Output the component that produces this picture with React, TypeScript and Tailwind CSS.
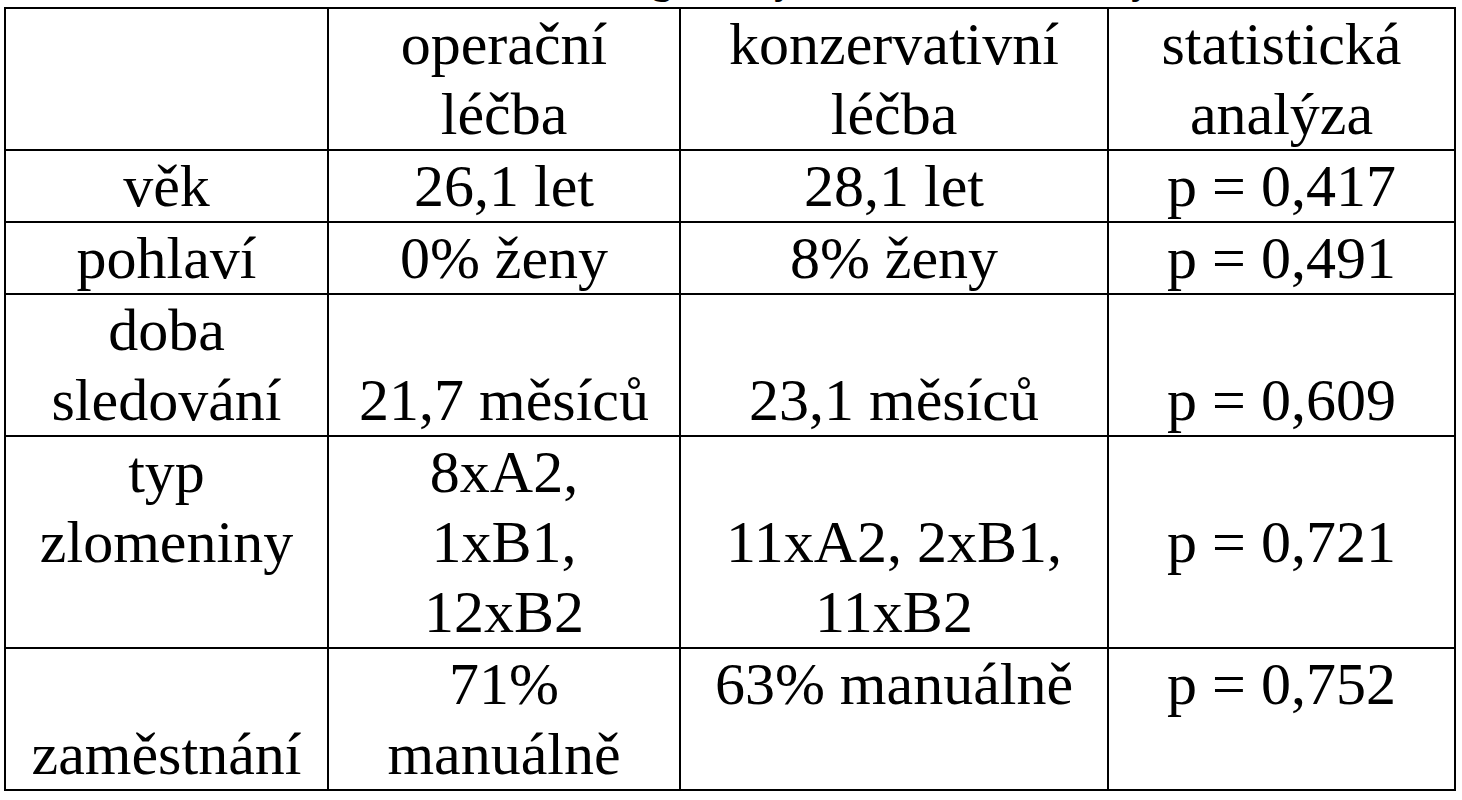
/*
 * Comparison table: operative vs. conservative treatment
 * - Times-like serif (Liberation Serif), large 60px type
 * - Plain black grid lines, white background
 * - Title row sits above the fold, only its descenders peek in
 */

const serif = "font-['Liberation_Serif','Times_New_Roman',serif]";

type Align = "top" | "middle" | "bottom";

function Cell({
  lines,
  align = "middle",
}: {
  lines: string[];
  align?: Align;
}) {
  const va =
    align === "top"
      ? "align-top"
      : align === "bottom"
        ? "align-bottom"
        : "align-middle";
  return (
    <td
      className={`border-2 border-black p-0 text-center whitespace-nowrap ${va}`}
    >
      {lines.map((line, i) => (
        <div key={i}>{line}</div>
      ))}
    </td>
  );
}

export default function App() {
  return (
    <div className={`min-h-screen bg-white text-black ${serif}`}>
      {/* Title — cut off by the top edge of the page */}
      <div className="-mt-[44px] h-[51px] overflow-hidden pl-[552px] text-left text-[40px] leading-[48px] font-bold whitespace-nowrap">
        Demografický charakter sledovaných
      </div>

      <table className="ml-[4px] w-[1452px] table-fixed border-collapse text-[60px] leading-[70px]">
        <colgroup>
          <col className="w-[323px]" />
          <col className="w-[352px]" />
          <col className="w-[428px]" />
          <col className="w-[347px]" />
        </colgroup>
        <tbody>
          <tr>
            <Cell lines={[""]} />
            <Cell lines={["operační", "léčba"]} />
            <Cell lines={["konzervativní", "léčba"]} />
            <Cell lines={["statistická", "analýza"]} />
          </tr>
          <tr>
            <Cell lines={["věk"]} />
            <Cell lines={["26,1 let"]} />
            <Cell lines={["28,1 let"]} />
            <Cell lines={["p = 0,417"]} />
          </tr>
          <tr>
            <Cell lines={["pohlaví"]} />
            <Cell lines={["0% ženy"]} />
            <Cell lines={["8% ženy"]} />
            <Cell lines={["p = 0,491"]} />
          </tr>
          <tr>
            <Cell lines={["doba", "sledování"]} />
            <Cell lines={["21,7 měsíců"]} align="bottom" />
            <Cell lines={["23,1 měsíců"]} align="bottom" />
            <Cell lines={["p = 0,609"]} align="bottom" />
          </tr>
          <tr>
            <Cell lines={["typ", "zlomeniny"]} align="top" />
            <Cell lines={["8xA2,", "1xB1,", "12xB2"]} />
            <Cell lines={["11xA2, 2xB1,", "11xB2"]} align="bottom" />
            <Cell lines={["p = 0,721"]} />
          </tr>
          <tr>
            <Cell lines={["zaměstnání"]} align="bottom" />
            <Cell lines={["71%", "manuálně"]} />
            <Cell lines={["63% manuálně"]} align="top" />
            <Cell lines={["p = 0,752"]} align="top" />
          </tr>
        </tbody>
      </table>
    </div>
  );
}
